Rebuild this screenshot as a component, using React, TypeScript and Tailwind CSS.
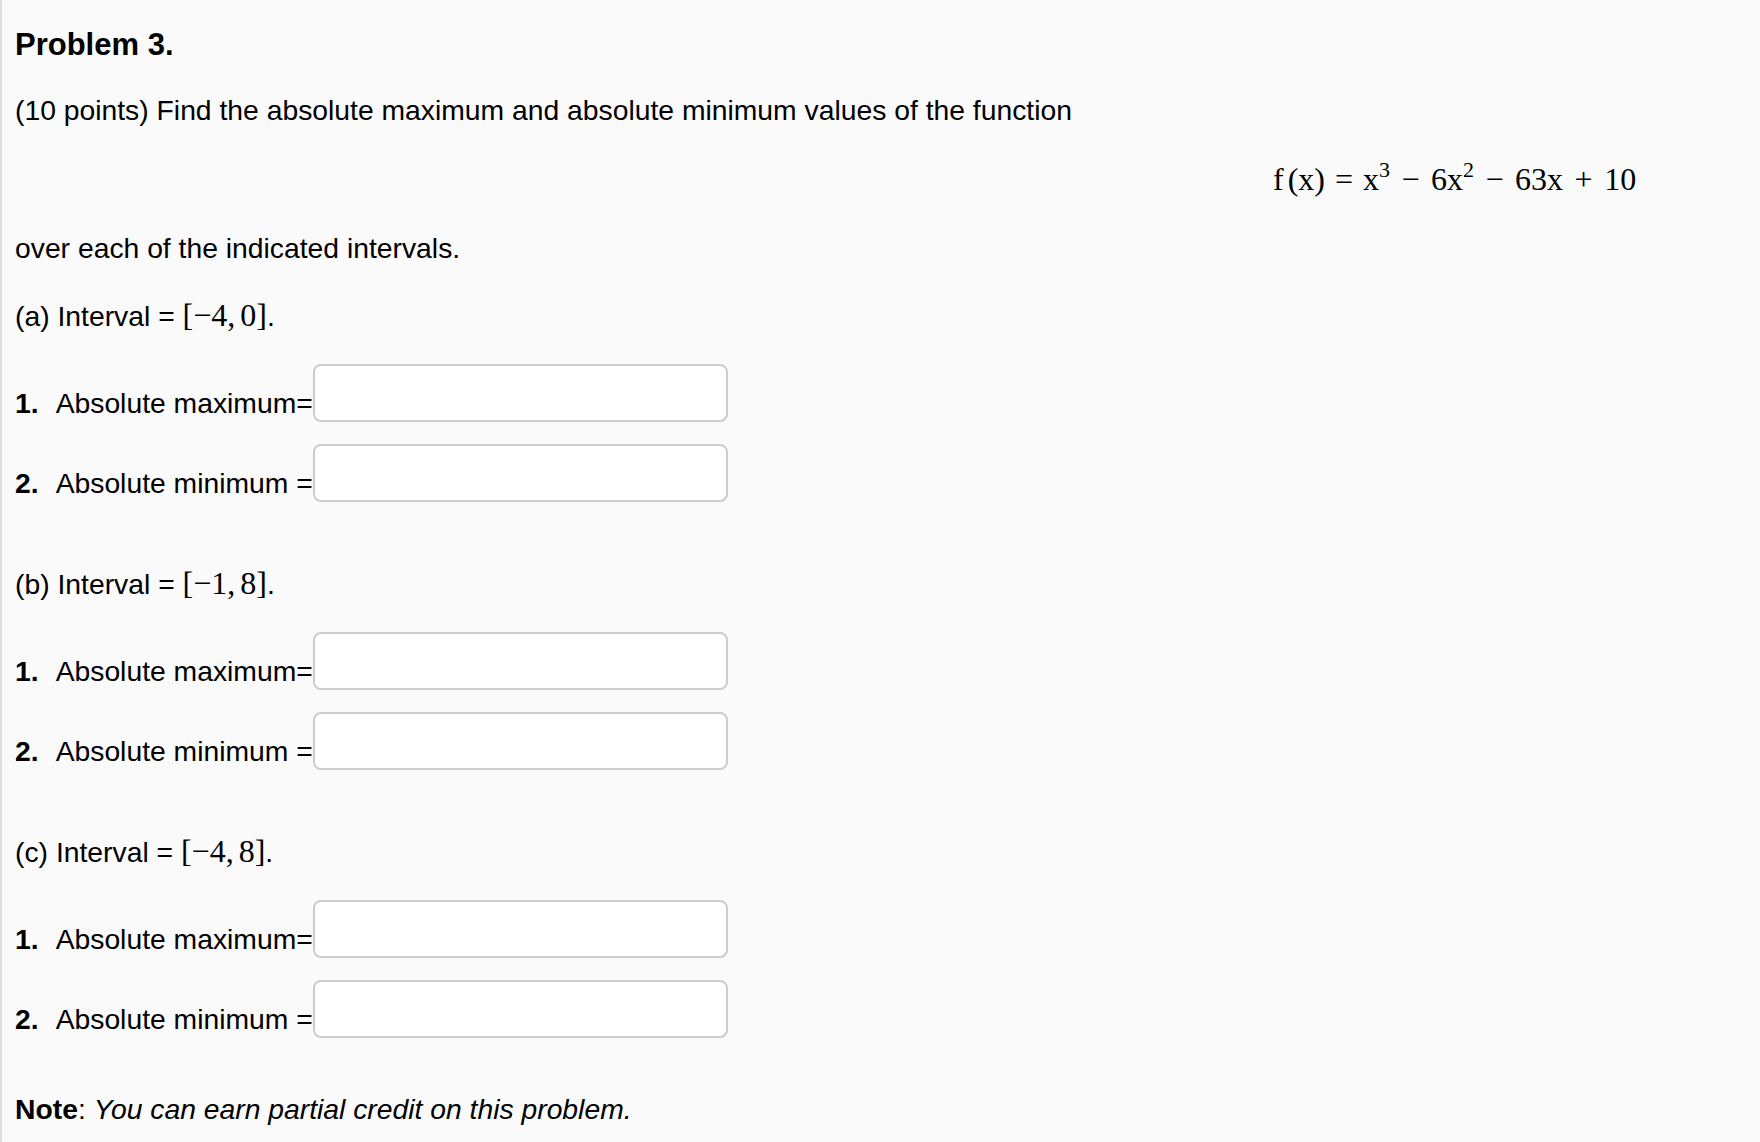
import React from 'react';

const sans = { fontFamily: '"Liberation Sans", Arial, Helvetica, sans-serif' };

function AnswerRow({ num, label, first }: { num: number; label: string; first?: boolean }) {
  return (
    <div className={`flex items-end ${first ? 'mt-[32px]' : 'mt-[22px]'}`}>
      <div className="w-[298px] shrink-0 whitespace-nowrap leading-[32px] mb-[3px]">
        <span className="font-bold">{num}.</span>
        <span className="ml-[17px]">{label}</span>
      </div>
      <input
        type="text"
        className="h-[58px] w-[415px] rounded-[8px] border-2 border-[#cdcdcd] bg-white px-3 text-[28px] outline-none"
      />
    </div>
  );
}

function Interval({ letter, lo, hi, top }: { letter: string; lo: string; hi: string; top: string }) {
  return (
    <div className={`${top} leading-[32px] whitespace-nowrap`}>
      ({letter}) Interval ={' '}
      <span className="font-['Liberation_Serif',serif] text-[32px] leading-none">
        [{lo},<span className="ml-[5px]">{hi}</span>]
      </span>
      .
    </div>
  );
}

function Section({ letter, lo, hi, top }: { letter: string; lo: string; hi: string; top: string }) {
  return (
    <section>
      <Interval letter={letter} lo={lo} hi={hi} top={top} />
      <AnswerRow num={1} label="Absolute maximum=" first />
      <AnswerRow num={2} label="Absolute minimum =" />
    </section>
  );
}

export default function App() {
  return (
    <div
      className="min-h-screen bg-[#fafafa] border-l-2 border-[#dcdcdc] pl-[13px] pt-[27px] pb-[20px] text-[28.3px] text-black"
      style={sans}
    >
      <h3 className="text-[31px] font-bold leading-[36px]">Problem 3.</h3>

      <p className="mt-[31px] leading-[32px]">
        (10 points) Find the absolute maximum and absolute minimum values of the function
      </p>

      {/* display formula */}
      <div className="mt-[33px] pl-[1258px] h-[40px] font-['Liberation_Serif',serif] text-[32px] leading-[40px] whitespace-nowrap">
        <span>f</span>
        <span className="ml-[4px]">(x)</span>
        <span className="mx-[10px]">=</span>
        <span>x</span>
        <span className="align-[13px] text-[22px] leading-none">3</span>
        <span className="mx-[11.5px]">−</span>
        <span>6x</span>
        <span className="align-[13px] text-[22px] leading-none">2</span>
        <span className="mx-[11.5px]">−</span>
        <span>63x</span>
        <span className="mx-[11.5px]">+</span>
        <span>10</span>
      </div>

      <p className="mt-[33px] leading-[32px]">over each of the indicated intervals.</p>

      <Section letter="a" lo="−4" hi="0" top="mt-[35px]" />
      <Section letter="b" lo="−1" hi="8" top="mt-[65px]" />
      <Section letter="c" lo="−4" hi="8" top="mt-[65px]" />

      <p className="mt-[55px] leading-[32px]">
        <span className="font-bold">Note</span>: <em>You can earn partial credit on this problem.</em>
      </p>
    </div>
  );
}
